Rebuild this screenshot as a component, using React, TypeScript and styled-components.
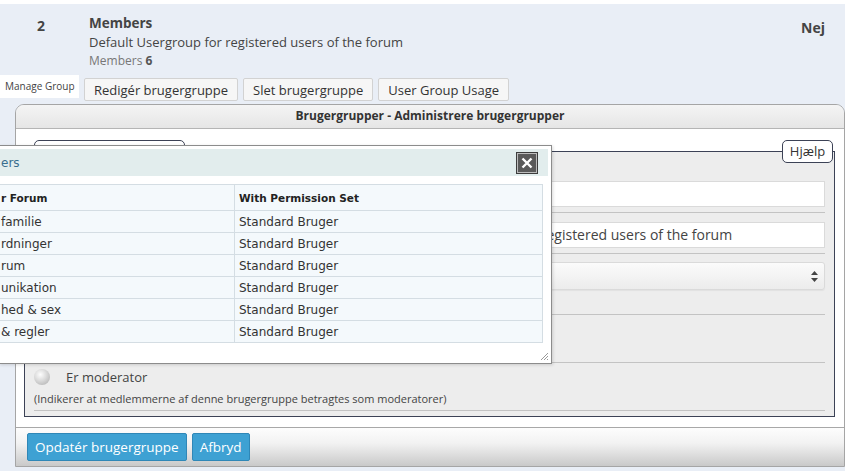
import React from 'react';
import styled, { createGlobalStyle } from 'styled-components';

const GlobalStyle = createGlobalStyle`
  html, body {
    margin: 0;
    padding: 0;
    background: #e9eef6;
  }
  body {
    font-family: 'Open Sans', 'Liberation Sans', sans-serif;
    color: #444;
  }
`;

const Page = styled.div`
  position: relative;
  width: 845px;
  height: 471px;
  overflow: hidden;
  background: #e9eef6;
`;

const TopStrip = styled.div`
  height: 4px;
  background: #ffffff;
`;

const GroupRow = styled.div`
  display: grid;
  grid-template-columns: 89px 1fr auto;
  padding: 10px 20px 5px 0;
`;

const GroupNumber = styled.div`
  font-size: 14px;
  font-weight: 700;
  line-height: 20px;
  padding: 2px 0 0 37px;
  color: #444;
`;

const GroupInfo = styled.div`
  display: flex;
  flex-direction: column;
`;

const GroupTitle = styled.div`
  font-size: 13.5px;
  font-weight: 700;
  line-height: 19px;
  color: #444;
`;

const GroupDesc = styled.div`
  font-size: 13px;
  line-height: 19px;
  color: #444;
`;

const GroupMeta = styled.div`
  font-size: 12px;
  line-height: 18px;
  color: #777;

  b {
    color: #555;
  }
`;

const GroupFlag = styled.div`
  font-size: 14px;
  font-weight: 700;
  line-height: 20px;
  padding-top: 4px;
  color: #444;
`;

const TabBar = styled.div`
  display: flex;
  align-items: flex-start;
  gap: 5px;
  height: 29px;
`;

const TabLabel = styled.div`
  width: 79px;
  height: 23px;
  background: #ffffff;
  font-size: 10px;
  line-height: 22px;
  padding-left: 5px;
  box-sizing: border-box;
  color: #444;
`;

const TabButton = styled.button`
  margin-top: 3px;
  height: 23px;
  padding: 0 9px;
  border: 1px solid #d2d2d2;
  border-radius: 2px;
  background: #f6f6f6;
  font-family: 'Open Sans', 'Liberation Sans', sans-serif;
  font-size: 13px;
  color: #333;
  line-height: 20px;
`;

const Panel = styled.div`
  margin-left: 15px;
  width: 828px;
  border: 1px solid #a5a5a5;
  border-radius: 9px 9px 0 0;
  overflow: hidden;
`;

const PanelTitle = styled.div`
  height: 23px;
  line-height: 22px;
  text-align: center;
  font-size: 12px;
  font-weight: 700;
  color: #333;
  background: linear-gradient(#f4f4f4, #e6e6e6);
  border-bottom: 1px solid #b5b5b5;
`;

const PanelBody = styled.div`
  background: #ffffff;
  padding: 10px 9px 10px 8px;
`;

const Fieldset = styled.div`
  margin-top: 12px;
  border: 1px solid #3c4256;
  background: #ededed;
  padding-bottom: 5px;
`;

const LegendRow = styled.div`
  display: flex;
  justify-content: space-between;
  margin: -12px 1px 0 9px;
  height: 23px;
`;

const Legend = styled.div<{ $wide?: boolean }>`
  box-sizing: border-box;
  height: 23px;
  width: ${(p) => (p.$wide ? '151px' : '51px')};
  border: 1px solid #3c4256;
  border-radius: 5px;
  background: #ffffff;
  font-size: 13px;
  line-height: 20px;
  text-align: center;
  color: #333;
`;

const FormRow = styled.div<{ $top: number; $height: number }>`
  display: grid;
  grid-template-columns: 351px 1fr;
  align-items: start;
  margin: 0 9px;
  height: ${(p) => p.$height}px;
  padding-top: ${(p) => p.$top}px;
  box-sizing: border-box;
  border-bottom: 1px solid #c3c3c3;
`;

const TextInput = styled.div`
  height: 26px;
  box-sizing: border-box;
  border: 1px solid #dadada;
  background: #ffffff;
  font-size: 14px;
  line-height: 24px;
  padding-left: 8px;
  color: #444;
  white-space: nowrap;
  overflow: hidden;
`;

const SelectBox = styled.div`
  position: relative;
  height: 28px;
  box-sizing: border-box;
  border: 1px solid #dadada;
  border-radius: 3px;
  background: linear-gradient(#fbfbfb, #ececec);
  box-shadow: 0 1px 1px rgba(0, 0, 0, 0.05);
`;

const SelectArrows = styled.svg`
  position: absolute;
  right: 6px;
  top: 8px;
`;

const RadioLine = styled.div`
  display: flex;
  align-items: center;
  gap: 16px;
  font-size: 13px;
  color: #444;
  height: 18px;
`;

const RadioDot = styled.span`
  width: 16px;
  height: 16px;
  border-radius: 50%;
  background: radial-gradient(circle at 40% 35%, #fdfdfd 0%, #d9d9d9 45%, #a9a9a9 100%);
`;

const HelpText = styled.div`
  margin-top: 6px;
  font-size: 11px;
  line-height: 14px;
  color: #444;
`;

const ModeratorRow = styled.div`
  margin: 0 9px;
  height: 48px;
  padding-top: 5px;
  box-sizing: border-box;
  border-bottom: 1px solid #c3c3c3;
`;

const PanelFooter = styled.div`
  display: flex;
  gap: 5px;
  height: 39px;
  padding: 5px 0 0 11px;
  box-sizing: border-box;
  border-top: 1px solid #a8a8a8;
  background: linear-gradient(#fdfdfd, #f2f2f2 40%, #c9c9c9);
`;

const ActionButton = styled.button`
  height: 28px;
  padding: 0 7px;
  border: 1px solid #2f87b7;
  border-radius: 2px;
  background: #3ea1d3;
  color: #ffffff;
  font-family: 'Open Sans', 'Liberation Sans', sans-serif;
  font-size: 13.5px;
  line-height: 24px;
`;

/* dialog that lies over the panel */
const Dialog = styled.div`
  position: absolute;
  left: -1px;
  top: 145px;
  width: 553px;
  height: 219px;
  box-sizing: border-box;
  background: #ffffff;
  border: 1px solid #8c8c8c;
  box-shadow: 1px 1px 3px rgba(0, 0, 0, 0.15);
  font-family: 'DejaVu Sans', Verdana, sans-serif;
`;

const DialogHeader = styled.div`
  display: flex;
  align-items: center;
  justify-content: space-between;
  margin: 3px 3px 0 0;
  height: 27px;
  background: #e2eded;
  padding: 0 10px 0 1px;
`;

const DialogTitle = styled.span`
  font-size: 12px;
  color: #3a6d8e;
`;

const CloseButton = styled.span`
  display: flex;
  width: 22px;
  height: 22px;
`;

const Table = styled.table`
  margin: 8px 10px 0 0;
  width: 543px;
  border-collapse: collapse;
  background: #f4f9fc;
  font-size: 12px;
  color: #333;
`;

const HeadCell = styled.th<{ $first?: boolean }>`
  height: 25px;
  padding: 0 0 0 ${(p) => (p.$first ? '1px' : '4px')};
  text-align: left;
  font-size: 10.5px;
  font-weight: 700;
  width: ${(p) => (p.$first ? '233px' : 'auto')};
  border: 1px solid #d4dde3;
  border-left: none;
  color: #222;
`;

const Cell = styled.td<{ $first?: boolean }>`
  height: 21px;
  padding: 0 0 0 ${(p) => (p.$first ? '1px' : '4px')};
  border: 1px solid #d4dde3;
  border-left: none;
  white-space: nowrap;
`;

const Grip = styled.svg`
  position: absolute;
  right: 2px;
  bottom: 2px;
`;

const rows = [
  'familie',
  'rdninger',
  'rum',
  'unikation',
  'hed & sex',
  '& regler',
];

export default function App() {
  return (
    <Page>
      <GlobalStyle />
      <TopStrip />
      <GroupRow>
        <GroupNumber>2</GroupNumber>
        <GroupInfo>
          <GroupTitle>Members</GroupTitle>
          <GroupDesc>Default Usergroup for registered users of the forum</GroupDesc>
          <GroupMeta>
            Members <b>6</b>
          </GroupMeta>
        </GroupInfo>
        <GroupFlag>Nej</GroupFlag>
      </GroupRow>

      <TabBar>
        <TabLabel>Manage Group</TabLabel>
        <TabButton>Redigér brugergruppe</TabButton>
        <TabButton>Slet brugergruppe</TabButton>
        <TabButton>User Group Usage</TabButton>
      </TabBar>

      <Panel>
        <PanelTitle>Brugergrupper - Administrere brugergrupper</PanelTitle>
        <PanelBody>
          <Fieldset>
            <LegendRow>
              <Legend $wide />
              <Legend>Hjælp</Legend>
            </LegendRow>
            <FormRow $top={18} $height={50}>
              <div />
              <TextInput>Members</TextInput>
            </FormRow>
            <FormRow $top={9} $height={41}>
              <div />
              <TextInput>Default Usergroup for registered users of the forum</TextInput>
            </FormRow>
            <FormRow $top={8} $height={61}>
              <div />
              <SelectBox>
                <SelectArrows width="7" height="11" viewBox="0 0 7 11">
                  <path d="M3.5 0 L7 4 L0 4 Z" fill="#444" />
                  <path d="M0 7 L7 7 L3.5 11 Z" fill="#444" />
                </SelectArrows>
              </SelectBox>
            </FormRow>
            <FormRow $top={8} $height={48}>
              <div />
              <div />
            </FormRow>
            <ModeratorRow>
              <RadioLine>
                <RadioDot />
                Er moderator
              </RadioLine>
              <HelpText>
                (Indikerer at medlemmerne af denne brugergruppe betragtes som moderatorer)
              </HelpText>
            </ModeratorRow>
          </Fieldset>
        </PanelBody>
        <PanelFooter>
          <ActionButton>Opdatér brugergruppe</ActionButton>
          <ActionButton>Afbryd</ActionButton>
        </PanelFooter>
      </Panel>

      <Dialog>
        <DialogHeader>
          <DialogTitle>ers</DialogTitle>
          <CloseButton>
            <svg width="22" height="22" viewBox="0 0 22 22">
              <rect x="0.5" y="0.5" width="21" height="21" fill="#5a5a5a" stroke="#3d3d3d" />
              <rect x="1.5" y="1.5" width="19" height="19" fill="none" stroke="#bdbdbd" />
              <path d="M6.5 6.5 L15.5 15.5 M15.5 6.5 L6.5 15.5" stroke="#ffffff" strokeWidth="2.4" />
            </svg>
          </CloseButton>
        </DialogHeader>
        <Table>
          <thead>
            <tr>
              <HeadCell $first>r Forum</HeadCell>
              <HeadCell>With Permission Set</HeadCell>
            </tr>
          </thead>
          <tbody>
            {rows.map((r) => (
              <tr key={r}>
                <Cell $first>{r}</Cell>
                <Cell>Standard Bruger</Cell>
              </tr>
            ))}
          </tbody>
        </Table>
        <Grip width="10" height="10" viewBox="0 0 10 10">
          <path d="M9 2 L2 9 M9 5 L5 9 M9 8 L8 9" stroke="#9a9a9a" strokeWidth="1" />
        </Grip>
      </Dialog>
    </Page>
  );
}
